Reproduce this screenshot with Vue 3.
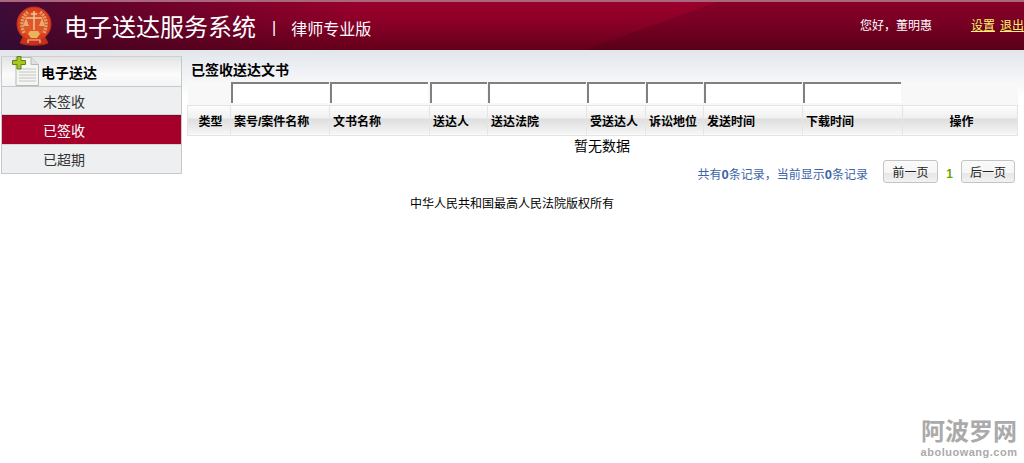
<template>
  <div class="page">
    <header class="top">
      <svg class="top__emblem" width="36" height="40" viewBox="0 0 36 40">
        <path d="M7 31L4 37C10 40 26 40 32 37L29 31Z" fill="#c8321c" stroke="#a82a14" />
        <circle cx="18" cy="18" r="17" fill="#d8401e" stroke="#c0301a" />
        <circle cx="18" cy="18" r="12.5" fill="#e0552a" />
        <path d="M8 27C4 19 6 10 12 6M28 27C32 19 30 10 24 6" stroke="#dfa068" stroke-width="3.5" stroke-dasharray="2 1" fill="none" />
        <path d="M18 5V24M10 12H26M15 8H21" stroke="#eec894" stroke-width="1.5" fill="none" />
        <path d="M10 12L7 20H13ZM26 12L23 20H29Z" fill="#e6ac74" />
        <path d="M14 25H22L24 28L21 32H15L12 28Z" fill="#e8b45c" />
        <path d="M12 37V34H24V37" stroke="#f0c890" stroke-width="1.2" fill="none" />
      </svg>
      <span class="top__title">电子送达服务系统</span>
      <span class="top__sep">|</span>
      <span class="top__edition">律师专业版</span>
      <span class="top__user">您好，董明惠</span>
      <a class="top__link top__link--first">设置</a>
      <a class="top__link">退出</a>
    </header>

    <div class="body">
      <aside class="side">
        <div class="side__head">
          <svg class="side__icon" width="28" height="30" viewBox="0 0 28 30">
            <path d="M4 1.5H19L26.5 8.5V29.5H4Z" fill="#f5f5f2" stroke="#b8b8b8" />
            <path d="M19 1.5V8.5H26.5" fill="#e0e0e0" stroke="#b8b8b8" />
            <path d="M7 13H24M7 16H24M7 19H24M7 22H24M7 25H24" stroke="#c4c4c4" />
            <path d="M5 0.5H9V4.5H13.5V8.5H9V13H5V8.5H0.5V4.5H5Z" fill="#a8c81c" stroke="#64801a" stroke-linejoin="round" />
          </svg>
          <span>电子送达</span>
        </div>
        <a
          v-for="item in menu"
          :key="item"
          class="side__item"
          :class="{ 'side__item--on': item === '已签收' }"
        >{{ item }}</a>
      </aside>

      <main class="main">
        <h2 class="main__title">已签收送达文书</h2>
        <table class="grid">
          <colgroup>
            <col v-for="col in columns" :key="col.name" :style="{ width: col.width + 'px' }" />
          </colgroup>
          <thead>
            <tr class="grid__filters">
              <td v-for="col in columns" :key="col.name">
                <input v-if="col.filter" type="text" class="grid__input" />
              </td>
            </tr>
            <tr class="grid__heads">
              <th v-for="col in columns" :key="col.name" :class="{ 'is-center': col.center }">{{ col.name }}</th>
            </tr>
          </thead>
        </table>
        <div class="empty">暂无数据</div>
        <div class="pager">
          <span class="pager__info">共有<b>0</b>条记录，当前显示<b>0</b>条记录</span>
          <button class="pager__btn">前一页</button>
          <span class="pager__num">1</span>
          <button class="pager__btn">后一页</button>
        </div>
      </main>
    </div>

    <footer class="foot">中华人民共和国最高人民法院版权所有</footer>

    <div class="mark">
      <div class="mark__cn">阿波罗网</div>
      <div class="mark__en">aboluowang.com</div>
    </div>
  </div>
</template>

<script setup>
const menu = ['未签收', '已签收', '已超期']

const columns = [
  { name: '类型', width: 43, center: true },
  { name: '案号/案件名称', width: 99, filter: true },
  { name: '文书名称', width: 100, filter: true },
  { name: '送达人', width: 58, filter: true },
  { name: '送达法院', width: 99, filter: true },
  { name: '受送达人', width: 59, filter: true },
  { name: '诉讼地位', width: 58, filter: true },
  { name: '发送时间', width: 99, filter: true },
  { name: '下载时间', width: 100, filter: true },
  { name: '操作', width: 115, center: true },
]
</script>

<style>
html,
body {
  margin: 0;
  background: #fff;
}
</style>

<style scoped>
.page {
  position: relative;
  height: 463px;
  overflow: hidden;
  font-family: "Liberation Sans", "Noto Sans CJK SC", sans-serif;
  font-size: 12px;
  color: #000;
  background: linear-gradient(#e2e6eb 0, #fff 48px) no-repeat;
  background-position: 0 50px;
}

.top {
  display: flex;
  align-items: center;
  box-sizing: border-box;
  height: 50px;
  padding-left: 16px;
  border-top: 2px solid #a8677c;
  background:
    linear-gradient(160deg, transparent 0 62%, rgba(40, 0, 20, 0.18) 62% 100%),
    linear-gradient(to right, rgba(35, 15, 60, 0.78) 0, rgba(50, 5, 40, 0.55) 90px, rgba(60, 0, 30, 0) 360px),
    linear-gradient(#9b002c 0, #8c0028 40%, #640019 100%);
  color: #fff;
}

.top__emblem {
  flex-shrink: 0;
  margin-top: -1px;
}

.top__title {
  margin: -2px 0 0 12px;
  font-size: 24px;
  width: 192px;
  white-space: nowrap;
}

.top__sep {
  margin: 4px 0 0 16px;
  font-size: 16px;
}

.top__edition {
  margin-left: 15px;
  width: 95px;
  font-size: 16px;
  margin-top: 3px;
}

.top__user {
  margin-left: 474px;
  width: 90px;
  font-size: 12px;
  margin-top: -3px;
}

.top__link {
  margin-left: 5px;
  font-size: 12px;
  margin-top: -3px;
  color: #fff36a;
  text-decoration: underline;
}

.top__link--first {
  margin-left: 21px;
}

.body {
  display: flex;
  align-items: flex-start;
  padding: 6px 7px 0 1px;
}

.side {
  flex-shrink: 0;
  width: 179px;
  border: 1px solid #c8c8c8;
  border-top-color: #d0d0d0;
  background: #eeeff1;
}

.side__head {
  display: flex;
  align-items: center;
  height: 29px;
  padding-left: 10px;
  border-bottom: 1px solid #c8c8c8;
  background: linear-gradient(#e4e4e4 0, #fbfbfb 60%, #f4f4f4 100%);
  font-size: 14px;
  font-weight: 700;
}

.side__icon {
  flex-shrink: 0;
  margin: -1px 1px 0 0;
}

.side__item {
  display: block;
  height: 27px;
  padding-left: 41px;
  border-bottom: 1px solid #d4d4d4;
  font-size: 14px;
  line-height: 31px;
  color: #333;
}

.side__item:last-child {
  border-bottom: 0;
  height: 28px;
}

.side__item--on {
  height: 28px;
  background: #a5002a;
  border-top: 1px solid #7a0a28;
  color: #fff;
}

.main {
  flex: 1;
  min-width: 0;
  margin-left: 5px;
}

.main__title {
  margin: 0;
  box-sizing: border-box;
  height: 25px;
  padding: 5px 0 0 4px;
  font-size: 14px;
  font-weight: 700;
  line-height: 18px;
}

.grid {
  width: 830px;
  table-layout: fixed;
  border-collapse: collapse;
}

.grid td,
.grid th {
  padding: 0;
}

.grid__filters {
  height: 24px;
  background: #f8f8f8;
}

.grid__input {
  display: block;
  box-sizing: border-box;
  width: 98px;
  max-width: calc(100% - 1px);
  height: 21px;
  padding: 0;
  border: 0;
  border-top: 2px solid #808080;
  border-left: 2px solid #808080;
  background: #fff;
  outline: none;
}

.grid__heads th {
  height: 29px;
  padding-left: 3px;
  border: 1px solid #e4e4e4;
  background: linear-gradient(#fdfdfd 0, #f0f0f0 45%, #dedede 46%, #f6f6f6 100%);
  font-size: 12px;
  font-weight: 700;
  text-align: left;
  white-space: nowrap;
}

.grid__heads th.is-center {
  padding-left: 3px;
  text-align: center;
}

.empty {
  height: 22px;
  font-size: 14px;
  line-height: 21px;
  text-align: center;
  width: 830px;
}

.pager {
  display: flex;
  align-items: center;
  justify-content: flex-end;
  width: 828px;
  height: 24px;
  margin-top: 2px;
}

.pager__info {
  margin: 3px 15px 0 0;
  color: #3c64a8;
}

.pager__info b {
  font-size: 13px;
}

.pager__btn {
  box-sizing: border-box;
  width: 55px;
  height: 23px;
  padding: 0;
  border: 1px solid #c4c4c4;
  border-radius: 3px;
  background: linear-gradient(#fafafa 0, #f6f6f6 55%, #e6e6e6 56%, #f2f2f2 100%);
  font-family: inherit;
  font-size: 12px;
  color: #222;
}

.pager__btn:last-child {
  width: 54px;
}

.pager__num {
  width: 23px;
  margin-top: 5px;
  font-weight: 700;
  color: #6aa800;
  text-align: center;
}

.foot {
  margin-top: 11px;
  line-height: 18px;
  text-align: center;
}

.mark {
  position: absolute;
  right: 6px;
  bottom: 5px;
  width: 98px;
  text-align: center;
  color: #aaa;
}

.mark__cn {
  font-size: 24px;
  font-weight: 700;
  line-height: 28px;
}

.mark__en {
  font-size: 11px;
  font-weight: 700;
  line-height: 12px;
  letter-spacing: 0.5px;
}
</style>
